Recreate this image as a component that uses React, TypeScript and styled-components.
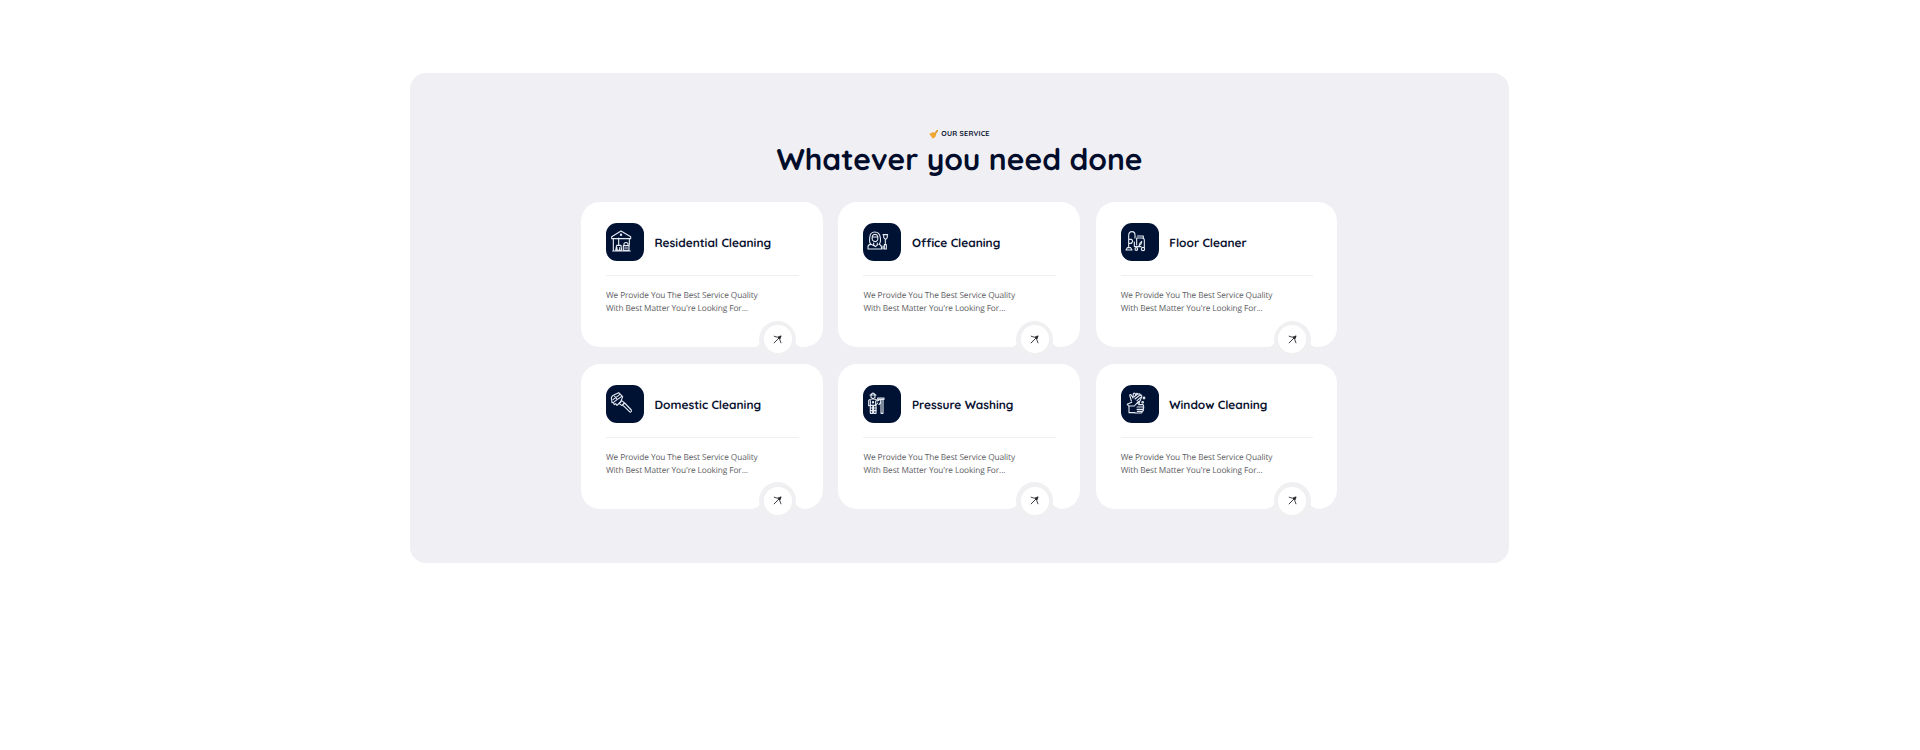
import React from "react";
import styled, { createGlobalStyle } from "styled-components";

const GlobalStyle = createGlobalStyle`
  *, *::before, *::after { box-sizing: border-box; }
  body { margin: 0; background: #ffffff; text-rendering: geometricPrecision; }
  h2, h3, p { margin: 0; }
`;

const headingFont = `Quicksand, Lato, "Open Sans", sans-serif`;

const Page = styled.main`
  min-height: 750px;
  padding: 73px 1px 0 0;
`;

const Panel = styled.section`
  width: 1099px;
  height: 490px;
  margin: 0 auto;
  padding: 55px 0 0 171px;
  border-radius: 16px;
  background: #efeff4;
`;

const Header = styled.header`
  width: 757px;
  display: flex;
  flex-direction: column;
  align-items: center;
`;

const Eyebrow = styled.p`
  display: flex;
  align-items: center;
  gap: 3px;
  height: 12px;
  color: #0b1230;
  font: 700 7.2px/12px ${headingFont};
  letter-spacing: 0.2px;
  white-space: nowrap;
`;

const Title = styled.h2`
  height: 38px;
  margin: 0 0 24px 0;
  color: #020c2b;
  font: 700 30px/38px ${headingFont};
  white-space: nowrap;
`;

const Grid = styled.div`
  display: grid;
  grid-template-columns: repeat(3, 241.5px);
  grid-auto-rows: 145px;
  gap: 16.8px 15.9px;
`;

const Card = styled.article`
  position: relative;
  padding: 21px 24px 0 25px;
  border-radius: 19px;
  background: #ffffff;
`;

const CardHead = styled.div`
  display: flex;
  align-items: center;
  gap: 10.5px;
  padding-bottom: 14px;
  border-bottom: 1px solid #f0f0f1;
`;

const IconTile = styled.div`
  flex: none;
  width: 38px;
  height: 38px;
  border-radius: 11px;
  background: #001233;

  svg {
    display: block;
    width: 38px;
    height: 38px;
    fill: none;
    stroke: #e6ebf3;
    stroke-width: 3.3;
    stroke-linecap: round;
    stroke-linejoin: round;
  }
`;

const CardTitle = styled.h3`
  padding-top: 2px;
  color: #0a1230;
  font: 700 11.9px/16px ${headingFont};
  white-space: nowrap;
`;

const Description = styled.p`
  margin-top: 12.8px;
  color: #606064;
  font: 400 8.3px/13.4px "Open Sans", "Noto Sans", sans-serif;
  letter-spacing: -0.1px;
  white-space: nowrap;
`;

const Notch = styled.div`
  position: absolute;
  right: 26.5px;
  bottom: -10.5px;
  width: 37px;
  height: 37px;
  display: grid;
  place-items: center;
  border-radius: 50%;
  background: #f0f0f2;

  &::before,
  &::after {
    content: "";
    position: absolute;
    bottom: 10px;
    width: 12px;
    height: 12px;
  }
  &::before {
    left: -8.5px;
    background: radial-gradient(circle at 0 0, transparent 11.5px, #f0f0f2 12px);
  }
  &::after {
    right: -8.5px;
    background: radial-gradient(circle at 100% 0, transparent 11.5px, #f0f0f2 12px);
  }
`;

const ArrowButton = styled.button`
  position: relative;
  z-index: 1;
  width: 28px;
  height: 28px;
  display: grid;
  place-items: center;
  padding: 0;
  border: 0;
  border-radius: 50%;
  background: #ffffff;
`;

const BroomIcon = () => (
  <svg width="9" height="9" viewBox="0 0 9 9">
    <path d="M8.5.4 5.8 4" stroke="#e09a30" strokeWidth="1.8" strokeLinecap="round" />
    <path d="M.3 3.7 4.4 2 7.3 4.2 6.6 6.5 3.8 8.8Z" fill="#efa832" />
  </svg>
);

const ArrowIcon = () => (
  <svg width="9" height="9" viewBox="0 0 9 9" fill="none" stroke="#25262a">
    <path d="M.8 8.2 7.8 1.2" strokeWidth=".9" />
    <path d="M.8 1.1Q4 3.4 8.1.9Q5.4 4.8 8.1 8.2" strokeWidth=".85" />
    <path d="M4.6 2.4 8.2.8 6.6 4.4Z" fill="#25262a" stroke="none" />
  </svg>
);

const icons: Record<string, React.ReactNode> = {
  house: (
    <svg viewBox="18 16 114 114">
      <path d="M35 57 63 40 92 57V63H35ZM40 64V99M88 64V82M38 100H91" />
      <path d="M56 61V82M50 83H63L65 98H47ZM51 90V98M59 90V98" />
      <path d="M72 83V78Q78 71 84 78V83M70 84H87V98H70ZM74 91H83" />
      <circle cx="63" cy="51" r="2" />
    </svg>
  ),
  office: (
    <svg viewBox="17 16 114 114">
      <path d="M32 94V87Q33 80 41 80Q35 75 37 61Q38 43 52 43Q67 43 69 60Q71 75 65 80Q73 81 73 94Z" />
      <path d="M45 67Q42 50 53 50Q64 50 61 67Q54 77 45 67ZM46 58H60M49 76V82L54 87 60 82V76M41 80 50 84" />
      <path d="M77 51H91M79 51V59L83 64H87L90 59V51M84 65V80M81 81H87V94H81ZM77 85V94" />
    </svg>
  ),
  vacuum: (
    <svg viewBox="18 16 114 114">
      <path d="M41 89V54Q41 42 51 42Q60 42 60 53V61M33 97 37 90H47L51 97ZM42 65H50L53 71 49 77H42" />
      <path d="M66 61H81Q88 61 88 68V89M65 61V82M72 84Q80 81 80 71Q72 77 72 84M67 55H85V62M58 73V86M60 87H78" />
      <circle cx="64" cy="94" r="4" />
      <circle cx="84" cy="94" r="5" />
    </svg>
  ),
  brush: (
    <svg viewBox="18 16 114 114">
      <path d="M35 61Q31 50 43 45L56 39 68 51 62 67 51 77 47 72 43 75 40 68 36 69Z" />
      <path d="M39 60 59 45M43 66 65 50M43 49 50 57M57 71 65 63 73 69 66 78ZM69 75 74 70 94 91Q96 96 91 98L69 77" />
    </svg>
  ),
  washer: (
    <svg viewBox="17 16 114 114">
      <path d="M41 45Q47 36 53 45V53L47 57 41 53ZM38 46H56M34 62Q38 57 47 58Q57 57 60 64L66 61M34 63V78H39V101H46V81H49V101H56V76L61 70M39 63V77H55V64" />
      <path d="M61 55H80V59H61ZM70 60V68L65 75M71 60V101M77 60V101M71 101H77M39 85H46M49 85H56M39 93H46M49 93H56" />
      <circle cx="47" cy="68" r="2" />
    </svg>
  ),
  gloves: (
    <svg viewBox="18 16 114 114">
      <path d="M49 64 44 46Q47 42 50 48L54 55 55 42Q60 37 62 46Q65 37 69 44Q75 39 76 47Q81 44 80 51L76 62 68 72M50 68 37 74" />
      <path d="M57 52 68 43M60 58 75 46M66 63 79 52M37 74 42 80V99H60M43 79H58L70 66Q76 66 71 75H84Q88 79 84 82Q89 84 84 88Q88 92 82 95Q82 101 75 100H60M66 82H83M66 89H83M67 95H81" />
      <circle cx="87" cy="55" r="2.5" />
      <circle cx="83" cy="68" r="2.5" />
    </svg>
  ),
};

const services = [
  { title: "Residential Cleaning", icon: "house" },
  { title: "Office Cleaning", icon: "office" },
  { title: "Floor Cleaner", icon: "vacuum" },
  { title: "Domestic Cleaning", icon: "brush" },
  { title: "Pressure Washing", icon: "washer" },
  { title: "Window Cleaning", icon: "gloves" },
];

export default function App() {
  return (
    <Page>
      <GlobalStyle />
      <Panel>
        <Header>
          <Eyebrow>
            <BroomIcon />
            OUR SERVICE
          </Eyebrow>
          <Title>Whatever you need done</Title>
        </Header>
        <Grid>
          {services.map((s) => (
            <Card key={s.title}>
              <CardHead>
                <IconTile>{icons[s.icon]}</IconTile>
                <CardTitle>{s.title}</CardTitle>
              </CardHead>
              <Description>
                We Provide You The Best Service Quality
                <br />
                With Best Matter You're Looking For...
              </Description>
              <Notch>
                <ArrowButton aria-label={s.title}>
                  <ArrowIcon />
                </ArrowButton>
              </Notch>
            </Card>
          ))}
        </Grid>
      </Panel>
    </Page>
  );
}
